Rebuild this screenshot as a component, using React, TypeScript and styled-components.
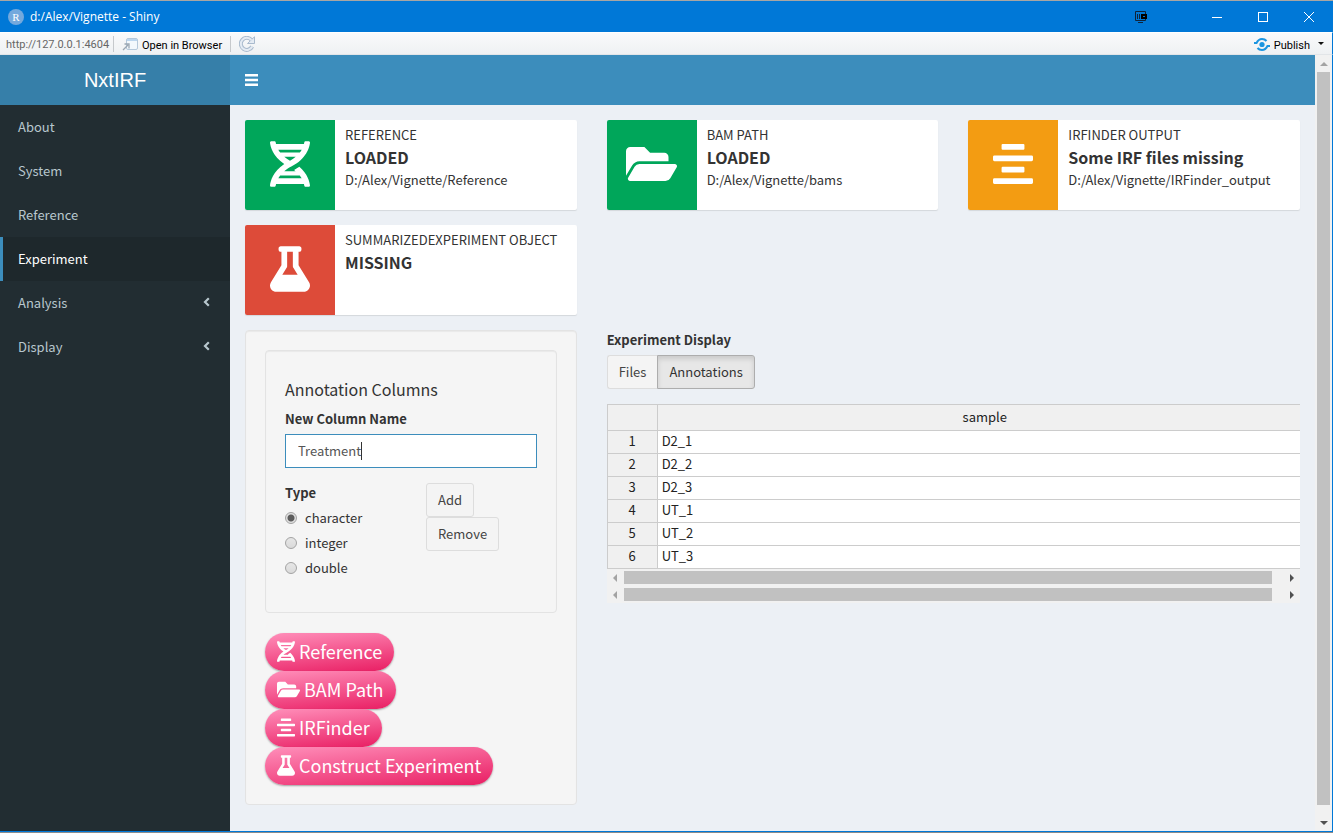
import React, { useState } from "react";
import styled, { createGlobalStyle, css } from "styled-components";
import { FaAlignCenter, FaDna, FaFlask, FaFolderOpen } from "react-icons/fa";

const sans = `"Noto Sans CJK JP", "Open Sans", sans-serif`;

const GlobalStyle = createGlobalStyle`
  *, *::before, *::after { box-sizing: border-box; }
  body { margin: 0; background: #ecf0f5; }
  button, input { font: inherit; color: inherit; margin: 0; }
  h1, h4, p { margin: 0; }
`;

const Window = styled.div`
  display: flex;
  flex-direction: column;
  min-height: 100vh;
  border-top: 1px solid #a8a6a3;
  border-bottom: 1px solid #8c8c8c;
  font-family: ${sans};
  font-size: 13px;
  line-height: 20px;
  color: #333;
`;

/* Window frame */

const TitleBar = styled.header`
  display: flex;
  align-items: center;
  height: 31px;
  padding: 0 1px 0 8px;
  background: #0078d7;
  color: #fff;
  font-family: "Open Sans", sans-serif;
  font-size: 12px;
`;

const AppBadge = styled.span`
  display: grid;
  place-items: center;
  width: 16px;
  height: 16px;
  margin-right: 6px;
  border-radius: 50%;
  background: #74a9dd;
  font: 11px/16px "Liberation Serif", serif;
`;

const WindowTitle = styled.span`
  flex: 1;
`;

const WindowButton = styled.button<{ $width?: number }>`
  display: grid;
  place-items: center;
  width: ${(p) => p.$width ?? 46}px;
  height: 31px;
  padding: 0;
  border: 0;
  background: none;
  color: #fff;
`;

const Toolbar = styled.div`
  display: flex;
  align-items: center;
  height: 23px;
  padding: 1px 8px 0 6px;
  border-top: 1px solid #fff;
  border-right: 1px solid #0078d7;
  border-bottom: 1px solid #e2e5e8;
  background: linear-gradient(#f9fafb, #eff1f3);
  font-family: Roboto, "Open Sans", sans-serif;
  font-size: 11px;
  color: #000;
`;

const Address = styled.span`
  width: 107px;
  padding-top: 2px;
  color: #666;
  white-space: nowrap;
`;

const Divider = styled.span`
  width: 1px;
  height: 16px;
  background: #c6c9cc;
`;

const ToolButton = styled.button`
  display: flex;
  align-items: center;
  gap: 4px;
  height: 20px;
  padding: 0 8px;
  border: 0;
  background: none;
  white-space: nowrap;
`;

const ToolLabel = styled.span`
  padding-top: 3px;
`;

const Spacer = styled.span`
  flex: 1;
`;

/* Dashboard shell */

const Viewport = styled.div`
  display: flex;
  flex: 1;
  border-right: 1px solid #0078d7;
  border-bottom: 1px solid #0078d7;
`;

const Sidebar = styled.aside`
  flex: 0 0 230px;
  background: #222d32;
`;

const Logo = styled.h1`
  height: 50px;
  background: #367fa9;
  color: #fff;
  text-align: center;
  font: 20px/50px "Liberation Sans", Arial, sans-serif;
`;

const MenuLink = styled.a<{ $active?: boolean }>`
  display: flex;
  align-items: center;
  justify-content: space-between;
  height: 44px;
  padding: 0 20px 0 15px;
  border-left: 3px solid transparent;
  color: #b8c7ce;
  text-decoration: none;
  svg {
    margin-bottom: 3px;
  }
  ${(p) =>
    p.$active &&
    css`
      border-left-color: #3c8dbc;
      background: #1e282c;
      color: #fff;
    `}
`;

const MainColumn = styled.div`
  flex: 1;
  min-width: 0;
  background: #ecf0f5;
`;

const Navbar = styled.nav`
  display: flex;
  height: 50px;
  background: #3c8dbc;
`;

const Toggle = styled.button`
  display: flex;
  align-items: center;
  padding: 0 15px;
  border: 0;
  background: none;
  color: #fff;
`;

const Content = styled.main`
  padding: 15px;
`;

const Grid = styled.div`
  display: grid;
  grid-template-columns: repeat(3, minmax(0, 1fr));
  gap: 15px 30px;
`;

/* Status boxes */

const Box = styled.section`
  display: flex;
  height: 90px;
  overflow: hidden;
  border-radius: 2px;
  background: #fff;
  box-shadow: 0 1px 1px rgba(0, 0, 0, 0.1);
`;

const BoxIcon = styled.div<{ $color: string; $wide?: boolean }>`
  display: grid;
  place-items: center;
  flex: 0 0 90px;
  padding-bottom: 2px;
  background: ${(p) => p.$color};
  color: #fff;
  svg {
    width: ${(p) => (p.$wide ? 51 : 40)}px;
    height: 46px;
  }
`;

const BoxText = styled.div`
  min-width: 0;
  padding: 5px 10px;
  white-space: nowrap;
`;

const BoxTitle = styled.p`
  text-transform: uppercase;
`;

const BoxValue = styled.p`
  font-size: 16px;
  line-height: 25px;
  font-weight: 700;
`;

/* Left panel */

const Well = styled.section`
  padding: 19px;
  border: 1px solid #e3e3e3;
  border-radius: 4px;
  background: #f5f5f5;
  box-shadow: inset 0 1px 1px rgba(0, 0, 0, 0.05);
`;

const SidePanel = styled(Well)`
  grid-column: 1;
`;

const InnerWell = styled(Well)`
  margin-bottom: 20px;
`;

const Heading = styled.h4`
  margin: 9px 0 10px;
  font-size: 16px;
  line-height: 20px;
  font-weight: 400;
`;

const FieldLabel = styled.label`
  display: block;
  margin-bottom: 5px;
  font-weight: 700;
`;

const InputWrap = styled.div`
  position: relative;
  margin-bottom: 15px;
`;

const TextInput = styled.input`
  display: block;
  width: 100%;
  height: 34px;
  padding: 5px 12px 7px;
  border: 1px solid #3c8dbc;
  background: #fff;
  color: #555;
  outline: none;
`;

const Caret = styled.span`
  position: absolute;
  top: 8px;
  left: 76px;
  width: 1px;
  height: 18px;
  background: #333;
`;

const TypeRow = styled.div`
  display: grid;
  grid-template-columns: 141px 1fr;
  align-items: start;
`;

const RadioSet = styled.fieldset`
  min-width: 0;
  margin: 0 0 10px;
  padding: 0;
  border: 0;
`;

const Legend = styled.legend`
  margin-bottom: 5px;
  padding: 0;
  font-weight: 700;
`;

const RadioLabel = styled.label`
  display: flex;
  align-items: center;
  gap: 8px;
  height: 20px;
  margin-bottom: 5px;
`;

const Radio = styled.input`
  appearance: none;
  width: 12px;
  height: 12px;
  border: 1px solid #a3a3a3;
  border-radius: 50%;
  background: linear-gradient(#e6e6e6, #dadada);
  &:checked {
    background: radial-gradient(circle, #5c5c5c 0 3px, #e0e0e0 4px);
  }
`;

const ButtonColumn = styled.div`
  display: flex;
  flex-direction: column;
  align-items: flex-start;
`;

const Button = styled.button<{ $pressed?: boolean }>`
  height: 34px;
  padding: 0 11px;
  border: 1px solid #ddd;
  border-radius: 3px;
  background: #f4f4f4;
  color: #444;
  ${(p) =>
    p.$pressed &&
    css`
      border-color: #adadad;
      background: #e7e7e7;
      color: #333;
      box-shadow: inset 0 3px 5px rgba(0, 0, 0, 0.125);
    `}
`;

const PinkButton = styled.button<{ $wide?: boolean }>`
  display: flex;
  align-items: center;
  gap: 4px;
  height: 38px;
  padding: 0 12px 2px;
  border: 0;
  border-radius: 19px;
  background: linear-gradient(174deg, #ff8fba, #e91e63);
  box-shadow: 0 1px 2px rgba(0, 0, 0, 0.35);
  color: #fff;
  font-size: 18px;
  white-space: nowrap;
  svg {
    width: ${(p) => (p.$wide ? 23 : 18)}px;
    height: 21px;
  }
`;

/* Right panel */

const Display = styled.section`
  grid-column: span 2;
  min-width: 0;
`;

const DisplayTitle = styled.p`
  margin-bottom: 5px;
  font-weight: 700;
`;

const ButtonGroup = styled.div`
  display: flex;
  margin-bottom: 15px;
  ${Button}:first-child {
    border-right: 0;
    border-radius: 3px 0 0 3px;
  }
  ${Button}:last-child {
    border-radius: 0 3px 3px 0;
  }
`;

const Table = styled.table`
  width: 100%;
  border-collapse: separate;
  border-spacing: 0;
  border-top: 1px solid #ccc;
  table-layout: fixed;
  color: #222;
  th,
  td {
    height: 23px;
    padding: 0 4px 2px;
    border-bottom: 1px solid #ccc;
    line-height: 20px;
    font-weight: 400;
  }
  th {
    background: #f0f0f0;
    text-align: center;
  }
  thead th {
    height: 26px;
  }
  thead th:last-child {
    padding-left: 16px;
  }
  th:first-child {
    width: 51px;
    border-left: 1px solid #ccc;
    border-right: 1px solid #ccc;
  }
  td {
    background: #fff;
  }
`;

/* Scroll bars */

const HTrack = styled.div`
  display: flex;
  align-items: center;
  height: 17px;
  background: #f1f1f1;
`;

const VTrack = styled.div`
  display: flex;
  flex-direction: column;
  align-items: center;
  flex: 0 0 17px;
  background: #f1f1f1;
`;

const ArrowSlot = styled.span`
  display: grid;
  place-items: center;
  width: 17px;
  height: 17px;
`;

const HThumb = styled.span`
  flex: 1;
  height: 13px;
  margin-right: 11px;
  background: #c1c1c1;
`;

const VThumb = styled.span`
  flex: 1;
  width: 13px;
  margin-bottom: 9px;
  background: #c1c1c1;
`;

const Arrow = ({ dir }: { dir: "left" | "right" | "up" | "down" }) => {
  const points = {
    left: "6,0 6,8 2,4",
    right: "3,0 3,8 7,4",
    up: "0,6 8,6 4,2",
    down: "0,2 8,2 4,6",
  }[dir];
  const fill = dir === "left" || dir === "up" ? "#a3a3a3" : "#505050";
  return (
    <ArrowSlot aria-hidden="true">
      <svg width="8" height="8">
        <polygon points={points} fill={fill} />
      </svg>
    </ArrowSlot>
  );
};

const HScroll = () => (
  <HTrack>
    <Arrow dir="left" />
    <HThumb />
    <Arrow dir="right" />
  </HTrack>
);

const PopOutIcon = () => (
  <svg width="16" height="14" viewBox="0 0 16 14" fill="none">
    <rect x="4.5" y="1.5" width="11" height="11" rx="1.5" fill="#f3f8fc" stroke="#b5c8da" />
    <path d="M5 3h10" stroke="#bcd6ee" strokeWidth="2" />
    <path d="M1 13l5-5M2.500 7h4.500v4.500" stroke="#9aa6b2" strokeWidth="1.300" />
  </svg>
);

const ReloadIcon = () => (
  <svg width="16" height="16" viewBox="0 0 16 16" fill="none">
    <path d="M13.200 10.500A6 6 0 1 1 12.400 4" stroke="#a9bacd" strokeWidth="4" />
    <path d="M15.500.8v6.700H8.500z" fill="#e4ebf3" stroke="#a9bacd" />
    <path d="M13.200 10.500A6 6 0 1 1 12.400 4" stroke="#e4ebf3" strokeWidth="2" />
  </svg>
);

const PublishIcon = () => (
  <svg width="16" height="13" viewBox="0 0 16 13" fill="none" stroke="#1b95e0" strokeWidth="2">
    <circle cx="8" cy="6.500" r="2.600" fill="#1b95e0" stroke="none" />
    <path d="M0 5h2.500C4 2 6 1 8 1c2 0 3.500.8 4.500 2" />
    <path d="M16 8h-2.500C12 11 10 12 8 12c-2 0-3.500-.8-4.500-2" />
  </svg>
);

const boxes = [
  { title: "Reference", value: "LOADED", path: "D:/Alex/Vignette/Reference", color: "#00a65a", Icon: FaDna },
  { title: "BAM Path", value: "LOADED", path: "D:/Alex/Vignette/bams", color: "#00a65a", Icon: FaFolderOpen, wide: true },
  { title: "IRFinder Output", value: "Some IRF files missing", path: "D:/Alex/Vignette/IRFinder_output", color: "#f39c12", Icon: FaAlignCenter },
  { title: "SummarizedExperiment Object", value: "MISSING", path: "", color: "#dd4b39", Icon: FaFlask },
];

const menu = [
  { label: "About" },
  { label: "System" },
  { label: "Reference" },
  { label: "Experiment", active: true },
  { label: "Analysis", nested: true },
  { label: "Display", nested: true },
];

const actions = [
  { label: "Reference", Icon: FaDna },
  { label: "BAM Path", Icon: FaFolderOpen, wide: true },
  { label: "IRFinder", Icon: FaAlignCenter },
  { label: "Construct Experiment", Icon: FaFlask },
];

const samples = ["D2_1", "D2_2", "D2_3", "UT_1", "UT_2", "UT_3"];

export default function App() {
  const [column, setColumn] = useState("Treatment");
  const [type, setType] = useState("character");

  return (
    <Window>
      <GlobalStyle />
      <TitleBar>
        <AppBadge>R</AppBadge>
        <WindowTitle>d:/Alex/Vignette - Shiny</WindowTitle>
        <WindowButton aria-label="Capture" $width={106}>
          <svg width="12" height="12" viewBox="0 0 12 12" fill="none" stroke="#10243a">
            <path d="M10.500 3V.5H.5v9h10V8M3 11.500h5M2.500 3v5M4.500 3v5" />
            <rect x="6" y="3" width="6" height="5" fill="#000" stroke="none" />
            <path d="M8 5.500h2" stroke="#0078d7" />
          </svg>
        </WindowButton>
        <WindowButton aria-label="Minimize">
          <svg width="10" height="10">
            <path d="M0 5.500h10" stroke="#fff" />
          </svg>
        </WindowButton>
        <WindowButton aria-label="Maximize">
          <svg width="10" height="10" fill="none">
            <rect x=".5" y=".5" width="9" height="9" stroke="#fff" />
          </svg>
        </WindowButton>
        <WindowButton aria-label="Close">
          <svg width="10" height="10">
            <path d="M0 0l10 10M10 0L0 10" stroke="#fff" />
          </svg>
        </WindowButton>
      </TitleBar>

      <Toolbar>
        <Address>http://127.0.0.1:4604</Address>
        <Divider />
        <ToolButton>
          <PopOutIcon />
          <ToolLabel>Open in Browser</ToolLabel>
        </ToolButton>
        <Divider />
        <ToolButton aria-label="Reload">
          <ReloadIcon />
        </ToolButton>
        <Spacer />
        <ToolButton>
          <PublishIcon />
          <ToolLabel>Publish</ToolLabel>
        </ToolButton>
        <svg width="6" height="4" aria-hidden="true">
          <polygon points="0,0 6,0 3,3" fill="#111" />
        </svg>
      </Toolbar>

      <Viewport>
        <Sidebar>
          <Logo>NxtIRF</Logo>
          <nav>
            {menu.map((m) => (
              <MenuLink key={m.label} href="#" $active={m.active}>
                {m.label}
                {m.nested && (
                  <svg width="7" height="10" fill="none" aria-hidden="true">
                    <path d="M5.800 1.200L2 5l3.800 3.800" stroke="currentColor" strokeWidth="2.200" />
                  </svg>
                )}
              </MenuLink>
            ))}
          </nav>
        </Sidebar>

        <MainColumn>
          <Navbar>
            <Toggle aria-label="Toggle navigation">
              <svg width="13" height="12" fill="#fff">
                <path d="M0 0h13v2.600H0zM0 4.700h13v2.600H0zM0 9.400h13v2.600H0z" />
              </svg>
            </Toggle>
          </Navbar>
          <Content>
            <Grid>
              {boxes.map(({ title, value, path, color, Icon, wide }) => (
                <Box key={title}>
                  <BoxIcon $color={color} $wide={wide}>
                    <Icon />
                  </BoxIcon>
                  <BoxText>
                    <BoxTitle>{title}</BoxTitle>
                    <BoxValue>{value}</BoxValue>
                    {path && <p>{path}</p>}
                  </BoxText>
                </Box>
              ))}
              <SidePanel>
                <InnerWell>
                  <Heading>Annotation Columns</Heading>
                  <FieldLabel htmlFor="column">New Column Name</FieldLabel>
                  <InputWrap>
                    <TextInput id="column" value={column} onChange={(e) => setColumn(e.target.value)} />
                    <Caret />
                  </InputWrap>
                  <TypeRow>
                    <RadioSet>
                      <Legend>Type</Legend>
                      {["character", "integer", "double"].map((t) => (
                        <RadioLabel key={t}>
                          <Radio type="radio" name="type" checked={type === t} onChange={() => setType(t)} />
                          {t}
                        </RadioLabel>
                      ))}
                    </RadioSet>
                    <ButtonColumn>
                      <Button>Add</Button>
                      <Button>Remove</Button>
                    </ButtonColumn>
                  </TypeRow>
                </InnerWell>
                {actions.map(({ label, Icon, wide }) => (
                  <PinkButton key={label} $wide={wide}>
                    <Icon />
                    {label}
                  </PinkButton>
                ))}
              </SidePanel>
              <Display>
                <DisplayTitle>Experiment Display</DisplayTitle>
                <ButtonGroup>
                  <Button>Files</Button>
                  <Button $pressed>Annotations</Button>
                </ButtonGroup>
                <Table>
                  <thead>
                    <tr>
                      <th aria-label="Row" />
                      <th scope="col">sample</th>
                    </tr>
                  </thead>
                  <tbody>
                    {samples.map((s, i) => (
                      <tr key={s}>
                        <th scope="row">{i + 1}</th>
                        <td>{s}</td>
                      </tr>
                    ))}
                  </tbody>
                </Table>
                <HScroll />
                <HScroll />
              </Display>
            </Grid>
          </Content>
        </MainColumn>

        <VTrack>
          <Arrow dir="up" />
          <VThumb />
          <Arrow dir="down" />
        </VTrack>
      </Viewport>
    </Window>
  );
}
